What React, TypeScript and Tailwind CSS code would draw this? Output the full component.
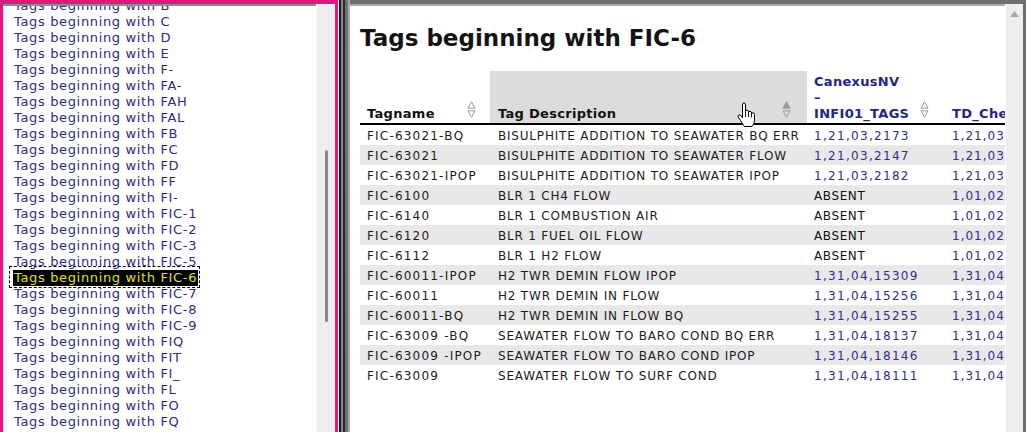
import React from "react";

const items = [
  "B", "C", "D", "E", "F-", "FA-", "FAH", "FAL", "FB", "FC", "FD", "FF", "FI-",
  "FIC-1", "FIC-2", "FIC-3", "FIC-5", "FIC-6", "FIC-7", "FIC-8", "FIC-9", "FIQ",
  "FIT", "FI_", "FL", "FO", "FQ",
];

const rows: [string, string, string, string][] = [
  ["FIC-63021-BQ", "BISULPHITE ADDITION TO SEAWATER BQ ERR", "1,21,03,2173", "1,21,03"],
  ["FIC-63021", "BISULPHITE ADDITION TO SEAWATER FLOW", "1,21,03,2147", "1,21,03"],
  ["FIC-63021-IPOP", "BISULPHITE ADDITION TO SEAWATER IPOP", "1,21,03,2182", "1,21,03"],
  ["FIC-6100", "BLR 1 CH4 FLOW", "ABSENT", "1,01,02"],
  ["FIC-6140", "BLR 1 COMBUSTION AIR", "ABSENT", "1,01,02"],
  ["FIC-6120", "BLR 1 FUEL OIL FLOW", "ABSENT", "1,01,02"],
  ["FIC-6112", "BLR 1 H2 FLOW", "ABSENT", "1,01,02"],
  ["FIC-60011-IPOP", "H2 TWR DEMIN FLOW IPOP", "1,31,04,15309", "1,31,04"],
  ["FIC-60011", "H2 TWR DEMIN IN FLOW", "1,31,04,15256", "1,31,04"],
  ["FIC-60011-BQ", "H2 TWR DEMIN IN FLOW BQ", "1,31,04,15255", "1,31,04"],
  ["FIC-63009 -BQ", "SEAWATER FLOW TO BARO COND BQ ERR", "1,31,04,18137", "1,31,04"],
  ["FIC-63009 -IPOP", "SEAWATER FLOW TO BARO COND IPOP", "1,31,04,18146", "1,31,04"],
  ["FIC-63009", "SEAWATER FLOW TO SURF COND", "1,31,04,18111", "1,31,04"],
];

function SortArrows({ filledUp = false }: { filledUp?: boolean }) {
  return (
    <svg width="9" height="17" viewBox="0 0 9 17" className="shrink-0">
      <path d="M4.5 0.8 L8 7.2 L1 7.2 Z" fill={filledUp ? "#9a9a9a" : "none"} stroke="#9a9a9a" strokeWidth="1" />
      <path d="M1 9.8 L8 9.8 L4.5 16.2 Z" fill="none" stroke="#9a9a9a" strokeWidth="1" />
    </svg>
  );
}

function HandCursor() {
  return (
    <svg width="19" height="26" viewBox="0 0 19 26" className="absolute left-[737px] top-[102px]">
      <path
        d="M5.5 3 Q5.5 1 7 1 Q8.5 1 8.5 3 V9.5 Q8.8 8.2 10 8.2 Q11.5 8.2 11.5 9.8 V10.5 Q11.8 9.4 13 9.4 Q14.5 9.4 14.5 11 V11.8 Q14.8 10.8 16 10.8 Q17.5 10.8 17.5 12.5 V18 Q17.5 22 15 24.5 H7.5 Q6 23 3.5 18.5 L1.2 14.8 Q0.6 13.4 2 13 Q3.2 12.7 4.2 14 L5.5 15.8 Z"
        fill="#ffffff"
        stroke="#000000"
        strokeWidth="1"
        strokeLinejoin="round"
      />
      <path d="M8.5 9.5 V15 M11.5 10.5 V15 M14.5 11.8 V15.5" stroke="#000000" strokeWidth="0.9" fill="none" />
    </svg>
  );
}

export default function App() {
  return (
    <div
      className="relative flex h-[432px] w-[1026px] overflow-hidden bg-white"
      style={{ fontFamily: '"DejaVu Sans", Verdana, sans-serif' }}
    >
      {/* Left pane */}
      <div className="flex h-full w-[338px] shrink-0 border-l-[3px] border-r-[3px] border-t-[4px] border-[#e8157c]">
        <div className="min-w-0 flex-1 overflow-hidden border-t-2 border-[#8c8c8c] bg-white">
          <div className="-mt-[8px] flex flex-col pl-[11px] text-[13px] leading-[16px] tracking-[0.65px] text-[#2b2b8f]">
            {items.map((it) =>
              it === "FIC-6" ? (
                <div key={it} className="h-[16px] whitespace-nowrap">
                  <span className="relative -ml-[1px] inline-block bg-black pl-[1px] pr-[1px] text-[#e4e400]">
                    Tags beginning with {it}
                    <span className="absolute -bottom-[2px] -left-[4px] -right-[2px] -top-[4px] border border-dashed border-black" />
                  </span>
                </div>
              ) : (
                <div key={it} className="h-[16px] whitespace-nowrap">
                  Tags beginning with {it}
                </div>
              )
            )}
          </div>
        </div>
        <div className="flex w-[19px] shrink-0 justify-center border-l border-[#fbfbfb] bg-[#eeeeee]">
          <div className="mt-[146px] h-[172px] w-[3px] rounded-full bg-[#8a8a8a]" />
        </div>
      </div>

      {/* Splitter */}
      <div className="flex h-full shrink-0">
        <div className="h-full w-px bg-white" />
        <div className="h-full w-[2px] bg-[#1a1a1a]" />
        <div className="h-full w-[2px] bg-[#8a8a8a]" />
        <div className="h-full w-[2px] bg-[#2a2a2a]" />
        <div className="h-full w-[3px] bg-[#707070]" />
        <div className="h-full w-[2px] bg-[#a9a9a9]" />
      </div>

      {/* Right pane */}
      <div className="flex h-full min-w-0 flex-1 border-r-[3px] border-t-4 border-[#6e6e6e]">
        <div className="min-w-0 flex-1 overflow-hidden border-t-2 border-[#a8a8a8] bg-white pl-[10px]">
          <div className="mt-[21px] h-[23px] whitespace-nowrap text-[23px] font-bold leading-none text-[#141414]">
            Tags beginning with FIC-6
          </div>

          <div className="mt-[21px] w-[725px]">
            {/* Header */}
            <div className="flex h-[52px] text-[13px] font-bold leading-[16px] tracking-[0.3px]">
              <div className="flex w-[130px] shrink-0 items-end justify-between pb-[1px] pl-[7px] pr-[14px] text-[#111111]">
                <span>Tagname</span>
                <span className="mb-[4px]"><SortArrows /></span>
              </div>
              <div className="flex w-[317px] shrink-0 items-end justify-between bg-[#dcdcdc] pb-[1px] pl-[8px] pr-[16px] text-[#111111]">
                <span>Tag Description</span>
                <span className="mb-[4px]"><SortArrows filledUp /></span>
              </div>
              <div className="flex w-[138px] shrink-0 items-end justify-between pb-[1px] pl-[7px] pr-[16px] text-[#23238f]">
                <span>
                  CanexusNV
                  <br />–
                  <br />INFI01_TAGS
                </span>
                <span className="mb-[4px]"><SortArrows /></span>
              </div>
              <div className="flex w-[140px] shrink-0 items-end pb-[1px] pl-[7px] text-[#23238f]">
                <span className="whitespace-nowrap">TD_Checks</span>
              </div>
            </div>
            <div className="h-[2px] w-full bg-black" />

            {/* Rows */}
            {rows.map((r, i) => (
              <div
                key={i}
                className={`flex h-[20px] pt-[3px] text-[12px] leading-[16px] ${i % 2 === 1 ? "bg-[#e8e8e8]" : "bg-white"}`}
              >
                <div className="w-[130px] shrink-0 whitespace-nowrap pl-[7px] tracking-[1.2px] text-[#1c1c1c]">{r[0]}</div>
                <div className="w-[317px] shrink-0 whitespace-nowrap pl-[8px] tracking-[0.8px] text-[#1c1c1c]">{r[1]}</div>
                <div
                  className={`w-[138px] shrink-0 whitespace-nowrap pl-[7px] ${r[2] === "ABSENT" ? "tracking-[0.6px] text-[#111111]" : "tracking-[1.3px] text-[#2e2e96]"}`}
                >
                  {r[2]}
                </div>
                <div className="w-[140px] shrink-0 whitespace-nowrap pl-[7px] tracking-[1px] text-[#2e2e96]">{r[3]}</div>
              </div>
            ))}
          </div>
        </div>
        <div className="flex w-[18px] shrink-0 justify-center border-l border-white bg-[#eeeeee]">
          <svg width="9" height="6" viewBox="0 0 9 6" className="mt-[7px]">
            <path d="M4.5 0 L9 6 L0 6 Z" fill="#a8a8a8" />
          </svg>
        </div>
      </div>

      <HandCursor />
    </div>
  );
}
